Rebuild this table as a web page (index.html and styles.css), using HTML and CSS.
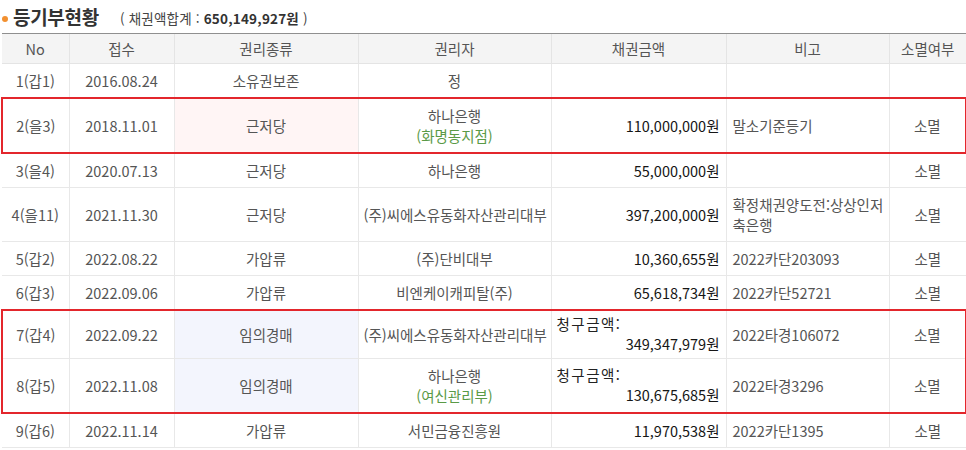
FILE: index.html
```html
<!DOCTYPE html>
<html lang="ko">
<head>
<meta charset="utf-8">
<title>등기부현황</title>
<link rel="stylesheet" href="styles.css">
</head>
<body>
<div class="title-row">
  <span class="dot"></span>
  <h2 class="title">등기부현황</h2>
  <span class="sum">( 채권액합계 : <b>650,149,927원</b> )</span>
</div>
<table class="reg">
  <colgroup>
    <col class="c1"><col class="c2"><col class="c3"><col class="c4"><col class="c5"><col class="c6"><col class="c7">
  </colgroup>
  <thead>
    <tr><th>No</th><th>접수</th><th>권리종류</th><th>권리자</th><th>채권금액</th><th>비고</th><th>소멸여부</th></tr>
  </thead>
  <tbody>
    <tr><td>1(갑1)</td><td>2016.08.24</td><td>소유권보존</td><td>정</td><td class="amt"></td><td class="note"></td><td></td></tr>
  </tbody>
  <tbody class="hl">
    <tr><td>2(을3)</td><td>2018.11.01</td><td class="pink">근저당</td><td>하나은행<br><span class="branch">(화명동지점)</span></td><td class="amt">110,000,000원</td><td class="note">말소기준등기</td><td>소멸</td></tr>
  </tbody>
  <tbody>
    <tr><td>3(을4)</td><td>2020.07.13</td><td>근저당</td><td>하나은행</td><td class="amt">55,000,000원</td><td class="note"></td><td>소멸</td></tr>
    <tr><td>4(을11)</td><td>2021.11.30</td><td>근저당</td><td>(주)씨에스유동화자산관리대부</td><td class="amt">397,200,000원</td><td class="note">확정채권양도전:상상인저<br>축은행</td><td>소멸</td></tr>
    <tr><td>5(갑2)</td><td>2022.08.22</td><td>가압류</td><td>(주)단비대부</td><td class="amt">10,360,655원</td><td class="note">2022카단203093</td><td>소멸</td></tr>
    <tr><td>6(갑3)</td><td>2022.09.06</td><td>가압류</td><td>비엔케이캐피탈(주)</td><td class="amt">65,618,734원</td><td class="note">2022카단52721</td><td>소멸</td></tr>
  </tbody>
  <tbody class="hl">
    <tr><td>7(갑4)</td><td>2022.09.22</td><td class="blue">임의경매</td><td>(주)씨에스유동화자산관리대부</td><td class="amt claim"><span class="claim-label">청구금액:</span><span class="claim-val">349,347,979원</span></td><td class="note">2022타경106072</td><td>소멸</td></tr>
    <tr><td>8(갑5)</td><td>2022.11.08</td><td class="blue">임의경매</td><td>하나은행<br><span class="branch">(여신관리부)</span></td><td class="amt claim"><span class="claim-label">청구금액:</span><span class="claim-val">130,675,685원</span></td><td class="note">2022타경3296</td><td>소멸</td></tr>
  </tbody>
  <tbody>
    <tr><td>9(갑6)</td><td>2022.11.14</td><td>가압류</td><td>서민금융진흥원</td><td class="amt">11,970,538원</td><td class="note">2022카단1395</td><td>소멸</td></tr>
  </tbody>
</table>
</body>
</html>
```

FILE: styles.css
```css
html, body {
  margin: 0;
  padding: 0;
  background: #fff;
}
body {
  font-family: "Noto Sans CJK KR", "Noto Sans", sans-serif;
  color: #555;
  font-size: 14.5px;
  width: 966px;
  overflow: hidden;
}
.title-row {
  height: 33px;
  display: flex;
  align-items: center;
  padding-left: 2px;
  box-sizing: border-box;
}
.dot {
  width: 6px;
  height: 6px;
  border-radius: 50%;
  background: #f29030;
  margin-right: 5px;
  margin-top: 4px;
}
.title {
  margin: 0;
  font-size: 19px;
  font-weight: 700;
  color: #333;
  letter-spacing: -0.3px;
}
.sum {
  margin-left: 21px;
  font-size: 13.5px;
  color: #444;
  margin-top: 3px;
  letter-spacing: 0.2px;
}
.sum b {
  font-weight: 700;
  color: #333;
}
.reg {
  border-collapse: collapse;
  width: 964px;
  margin-left: 1px;
  table-layout: fixed;
  line-height: 20px;
}
.c1 { width: 67px; }
.c2 { width: 105px; }
.c3 { width: 184px; }
.c4 { width: 193px; }
.c5 { width: 175px; }
.c6 { width: 163px; }
.c7 { width: 77px; }
.reg th {
  background: #f4f4f4;
  font-weight: 400;
  color: #555;
  height: 29px;
  padding: 0 4px;
  border-top: 1px solid #8f8f8f;
  border-left: 1px solid #e4e4e4;
  border-bottom: 1px solid #e4e4e4;
}
.reg td {
  text-align: center;
  padding: 7px 5px 6px;
  border-left: 1px solid #e8e8e8;
  border-bottom: 1px solid #e8e8e8;
  vertical-align: middle;
  white-space: nowrap;
}
.reg th:first-child, .reg td:first-child { border-left: none; }
.reg tbody.hl { border: 2px solid #e3262c; }
.reg td.amt {
  text-align: right;
  color: #161616;
  font-weight: 400;
  padding-right: 6px;
}
.reg td.note { text-align: left; padding-left: 6px; }
.reg td.pink { background: #fff5f5; }
.reg td.blue { background: #f3f5fd; }
.branch { color: #5a9a46; }
.claim-label {
  display: block;
  text-align: left;
  color: #222;
  letter-spacing: 1.5px;
  margin-top: -4px;
}
.claim-val {
  display: block;
  text-align: right;
  margin-bottom: -2px;
}
```
